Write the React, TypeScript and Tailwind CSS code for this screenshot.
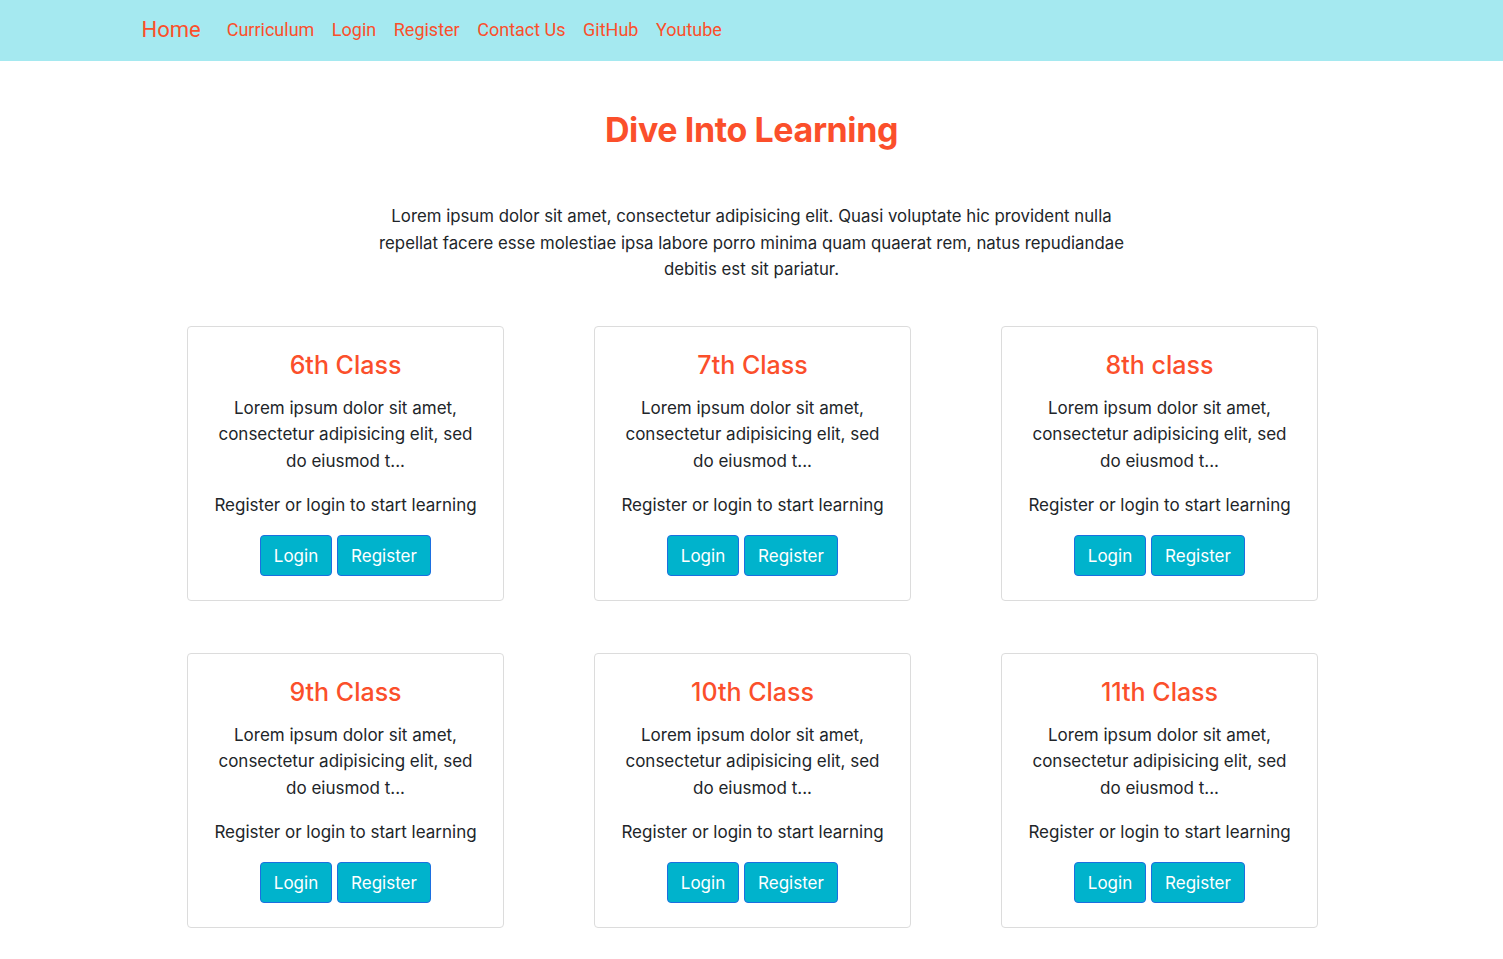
import React from "react";

const classes = ["6th Class", "7th Class", "8th class", "9th Class", "10th Class", "11th Class"];

const navLinks = ["Curriculum", "Login", "Register", "Contact Us", "GitHub", "Youtube"];

const ClassCard = ({ title }: { title: string }) => {
  return (
    <div className="border border-[#dcdcdc] rounded-[4px] bg-white px-6 pt-[20px] pb-[24px] flex flex-col items-center text-center">
      <h3 className="text-[25px] leading-[36px] font-medium text-[#fb4f2b]">{title}</h3>
      <p className="mt-[12px] text-[17px] leading-[26.5px] text-[#212529]">
        Lorem ipsum dolor sit amet, consectetur adipisicing elit, sed do eiusmod t...
      </p>
      <p className="mt-[18px] text-[17px] leading-[26.5px] text-[#212529]">
        Register or login to start learning
      </p>
      <div className="mt-[16px] flex gap-[5px]">
        <button className="h-[41px] w-[72px] pt-[3px] rounded-[4px] border border-[#1b6fe0] bg-[#00b3cc] text-[17px] text-white">
          Login
        </button>
        <button className="h-[41px] w-[94px] pt-[3px] rounded-[4px] border border-[#1b6fe0] bg-[#00b3cc] text-[17px] text-white">
          Register
        </button>
      </div>
    </div>
  );
};

export default function App() {
  return (
    <div className="min-h-screen bg-white" style={{ fontFamily: "Inter, 'Noto Sans', sans-serif" }}>
      <nav className="bg-[#a5e9f0] h-[61px] w-full">
        <div
          className="w-[1220px] mx-auto h-full flex items-center pb-[2px]"
          style={{ fontFamily: "Roboto, 'Liberation Sans', sans-serif" }}
        >
          <a href="#" className="text-[22px] text-[#fb4f2b] mr-[26px]">
            Home
          </a>
          <ul className="flex items-center gap-[17.5px]">
            {navLinks.map((l) => (
              <li key={l}>
                <a href="#" className="text-[18px] text-[#fb4f2b]">
                  {l}
                </a>
              </li>
            ))}
          </ul>
        </div>
      </nav>

      <main className="flex flex-col items-center">
        <h1 className="mt-[47px] text-[34px] leading-[44px] font-bold text-[#fb4f2b] tracking-[-0.4px]">
          Dive Into Learning
        </h1>
        <p className="mt-[51px] w-[760px] text-center text-[16.8px] leading-[26.5px] text-[#212529]">
          Lorem ipsum dolor sit amet, consectetur adipisicing elit. Quasi voluptate hic provident nulla repellat facere
          esse molestiae ipsa labore porro minima quam quaerat rem, natus repudiandae debitis est sit pariatur.
        </p>

        <div className="mt-[43px] mb-[33px] ml-[2px] grid grid-cols-3 gap-x-[90px] gap-y-[52px] w-[1131px]">
          {classes.map((c) => (
            <ClassCard key={c} title={c} />
          ))}
        </div>
      </main>
    </div>
  );
}
